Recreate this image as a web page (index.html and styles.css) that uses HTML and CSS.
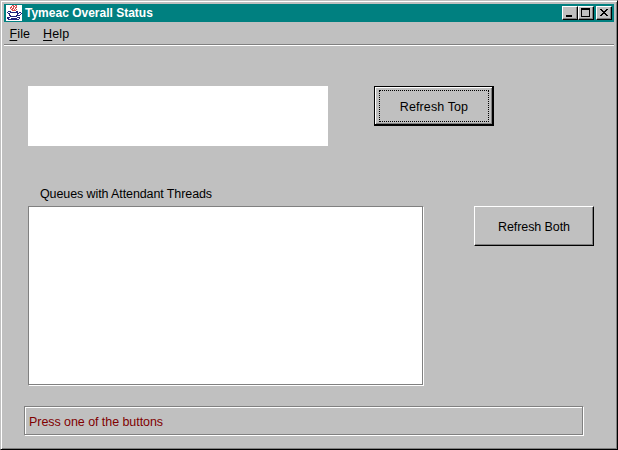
FILE: index.html
```html
<!DOCTYPE html>
<html lang="en">
<head>
<meta charset="utf-8">
<title>Tymeac Overall Status</title>
<link rel="stylesheet" href="styles.css">
</head>
<body>
<div class="window">
  <header class="titlebar">
    <svg class="logo" viewBox="0 0 16 16" shape-rendering="crispEdges">
      <rect width="16" height="16" fill="#fff"/>
      <path d="M6 .5h2M9 .5h2M5 1.5h1M7 1.5h2M10 1.5h1M4 2.500h2M7 2.500h1M9 2.500h2M4 3.500h1M6 3.500h2M9 3.500h1M5 4.500h2M8 4.500h1M10 4.500h1M6 5.500h4" stroke="#d85050" fill="none"/>
      <path d="M2 6.500h3M10 6.500h2M1 7.500h1M4 7.500h8M13 7.500h2M2 8.500h2M11 8.500h2M15 8.500h1M3 9.500h1M11 9.500h1M14 9.500h1M3 10.500h2M10 10.500h4M4 11.500h7M1 12.500h3M11 12.500h3M1 13.500h2M5 13.500h6M13 13.500h1M2 14.500h11" stroke="#20207c" fill="none"/>
    </svg>
    <span class="title">Tymeac Overall Status</span>
    <div class="controls">
      <button class="control" aria-label="Minimize"><svg viewBox="0 0 14 12" shape-rendering="crispEdges"><path d="M3 8h6v2H3z"/></svg></button>
      <button class="control" aria-label="Maximize"><svg viewBox="0 0 14 12" shape-rendering="crispEdges"><path fill-rule="evenodd" d="M2 1h9v9H2zM3 3v6h7V3z"/></svg></button>
      <button class="control close" aria-label="Close"><svg viewBox="0 0 14 12" shape-rendering="crispEdges"><path d="M3 2h2v1h1v1h2V3h1V2h2v1h-1v1H9v1H8v1h1v1h1v1h1v1H9V8H8V7H6v1H5v1H3V8h1V7h1V6h1V5H5V4H4V3H3z"/></svg></button>
    </div>
  </header>
  <nav class="menubar">
    <span class="menu"><u>F</u>ile</span>
    <span class="menu"><u>H</u>elp</span>
  </nav>
  <main class="content">
    <section class="row top">
      <div class="summary"></div>
      <button class="btn default"><span class="focus">Refresh Top</span></button>
    </section>
    <div class="label"><span>Queues with Attendant Threads</span></div>
    <section class="row queues">
      <div class="list"></div>
      <button class="btn"><span>Refresh Both</span></button>
    </section>
    <footer class="status"><span>Press one of the buttons</span></footer>
  </main>
</div>
</body>
</html>
```
FILE: styles.css
```css
* { box-sizing: border-box; }
body {
  margin: 0;
  font: 12.5px/16px "Liberation Sans", Arial, sans-serif;
  color: #000;
  background: #c0c0c0;
}
button { font: inherit; color: inherit; margin: 0; padding: 0; border-radius: 0; }
.window {
  width: 618px;
  height: 450px;
  padding: 3px;
  background: #c0c0c0;
  border: 1px solid;
  border-color: #c0c0c0 #000 #000 #c0c0c0;
  box-shadow: inset 1px 1px #fff, inset -1px -1px #808080;
}
.titlebar {
  height: 18px;
  display: flex;
  align-items: center;
  padding: 0 2px;
  background: #008080;
}
.logo { width: 16px; height: 16px; margin-right: 3px; }
.title { color: #fff; font-weight: bold; font-size: 12px; white-space: nowrap; }
.controls { display: flex; margin-left: auto; }
.control {
  width: 16px;
  height: 14px;
  background: #c0c0c0;
  border: 1px solid;
  border-color: #fff #000 #000 #fff;
  box-shadow: inset -1px -1px #808080;
}
.control svg { display: block; width: 14px; height: 12px; }
.close { margin-left: 2px; }
.menubar {
  height: 24px;
  display: flex;
  gap: 13px;
  padding: 4px 5.5px 0;
  border-bottom: 1px solid #fff;
  box-shadow: inset 0 -1px #808080;
}
.menu { letter-spacing: .1px; }
.menu u { text-underline-offset: 2px; text-decoration-thickness: 1px; }
.content { padding: 40px 20px 0; }
.row { display: flex; align-items: flex-start; }
.top { padding-left: 4px; }
.summary { width: 300px; height: 60px; margin-right: 46px; background: #fff; }
.btn {
  width: 120px;
  height: 40px;
  display: flex;
  align-items: center;
  justify-content: center;
  padding-top: 1px;
  background: #c0c0c0;
  border: 1px solid;
  border-color: #fff #000 #000 #fff;
  box-shadow: inset -1px -1px #808080;
  letter-spacing: -.08px;
}
.default {
  padding: 0;
  border-color: #000;
  box-shadow: inset -1px -1px #000, inset 1px 1px #fff, inset -2px -2px #808080;
  letter-spacing: .1px;
}
.focus {
  width: 110px;
  height: 32px;
  display: flex;
  align-items: center;
  justify-content: center;
  padding-top: 1px;
  border: 1px dotted #000;
}
.label { height: 60px; padding: 40px 0 0 16px; letter-spacing: -.1px; white-space: nowrap; }
.queues { padding-left: 4px; }
.list {
  width: 396px;
  height: 180px;
  margin-right: 50px;
  background: #fff;
  border: 1px solid;
  border-color: #808080 #fff #fff #808080;
  box-shadow: inset -1px -1px #808080;
}
.status {
  width: 560px;
  height: 30px;
  margin-top: 20px;
  padding: 7px 4px;
  color: #800000;
  border: 1px solid;
  border-color: #808080 #fff #fff #808080;
  box-shadow: inset -1px -1px #808080, inset 1px 1px #fff;
  letter-spacing: -.06px;
}
```
